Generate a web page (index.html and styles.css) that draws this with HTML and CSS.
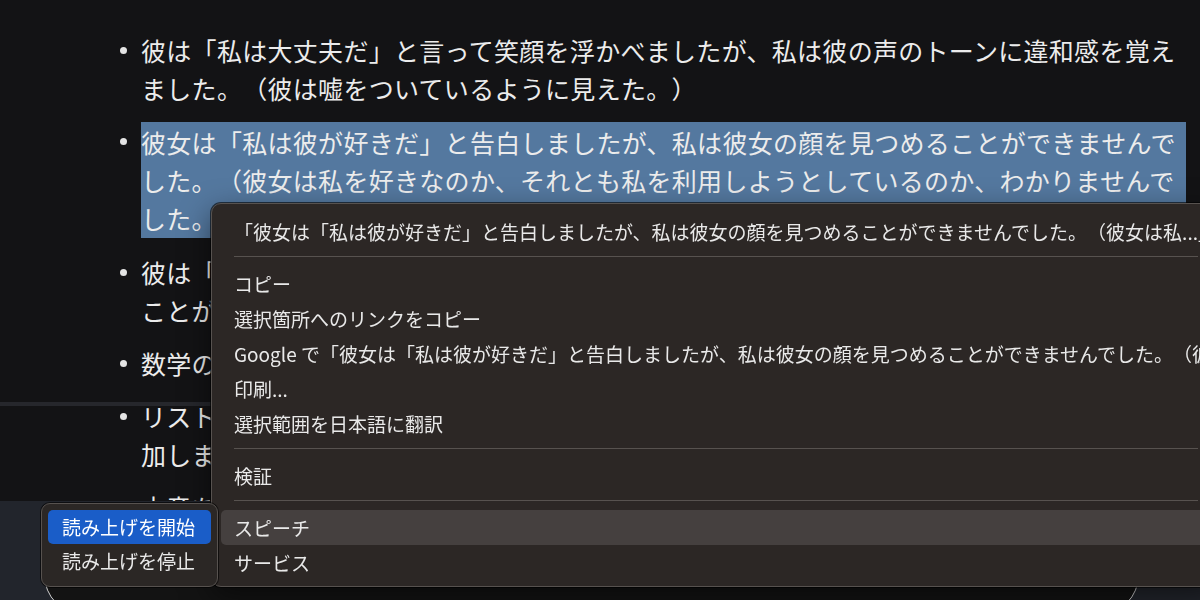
FILE: index.html
```html
<!DOCTYPE html>
<html lang="ja">
<head>
    <meta charset="UTF-8">
    <meta name="viewport" content="width=device-width, initial-scale=1.0">
    <title>感情の読み取り</title>
    <link rel="stylesheet" href="styles.css">
</head>
<body>

<main class="article">
    <ul class="points">
        <li>彼は「私は大丈夫だ」と言って笑顔を浮かべましたが、私は彼の声のトーンに違和感を覚えました。（彼は嘘をついているように見えた。）</li>
        <li><span class="selected">彼女は「私は彼が好きだ」と告白しましたが、私は彼女の顔を見つめることができませんでした。（彼女は私を好きなのか、それとも私を利用しようとしているのか、わかりませんでした。）</span></li>
        <li>彼は「明日は必ず来るよ」と約束してくれましたが、私はその言葉を心の底から強く信じることができませんでした。</li>
        <li>数学のテストで満点を取りましたが、先生は私がカンニングをしたと疑いました。</li>
        <li>リストの各項目には、感情の読み取りが難しい日常の場面の例文をいくつか選び、新たに追加しました。</li>
        <li>文章を読み直して、自然な表現になるように調整しました。</li>
    </ul>
</main>

<div class="scroll-edge"></div>

<footer class="composer">
    <div class="composer-box"></div>
</footer>

<!-- 右クリックメニュー -->
<div class="context-menu">
    <div class="menu-title">「彼女は「私は彼が好きだ」と告白しましたが、私は彼女の顔を見つめることができませんでした。（彼女は私...」</div>
    <div class="menu-sep"></div>
    <div class="menu-item">コピー</div>
    <div class="menu-item">選択箇所へのリンクをコピー</div>
    <div class="menu-item">Google で「彼女は「私は彼が好きだ」と告白しましたが、私は彼女の顔を見つめることができませんでした。（彼女は私...」を検索</div>
    <div class="menu-item">印刷...</div>
    <div class="menu-item">選択範囲を日本語に翻訳</div>
    <div class="menu-sep"></div>
    <div class="menu-item">検証</div>
    <div class="menu-sep"></div>
    <div class="menu-item is-open">スピーチ</div>
    <div class="menu-item">サービス</div>
</div>

<!-- スピーチのサブメニュー -->
<div class="submenu">
    <div class="submenu-item is-active">読み上げを開始</div>
    <div class="submenu-item">読み上げを停止</div>
</div>

</body>
</html>
```

FILE: styles.css
```css
/* リセット */
* {
    margin: 0;
    padding: 0;
    box-sizing: border-box;
}

body {
    font-family: "Noto Sans CJK JP", "Noto Sans", sans-serif;
    background: #131315;
    color: #ececec;
    height: 600px;
    overflow: hidden;
    text-spacing-trim: space-all;
}

/* 本文 */
.article {
    padding-top: 31px;
}

.points {
    list-style: none;
    width: 1186px;
    padding-left: 120px;
    font-size: 25px;
    letter-spacing: 0.3px;
    line-height: 38px;
}

.points li {
    display: flex;
    margin-bottom: 15px;
}

.points li::before {
    content: "";
    flex: none;
    width: 7px;
    height: 7px;
    margin: 15.5px 14px 0 0;
    border-radius: 50%;
    background: #e4e4e4;
}

.selected {
    background: #54789f;
    padding: 1px 0;
}

/* スクロール境界の帯 */
.scroll-edge {
    position: absolute;
    left: 0;
    top: 402px;
    width: 100%;
    height: 4px;
    background: #26272c;
}

/* 下部の入力エリア */
.composer {
    position: fixed;
    left: 0;
    right: 0;
    bottom: 0;
    height: 99px;
    padding: 14px 61px 0 44px;
    background: #22252c;
    overflow: hidden;
}

.composer-box {
    height: 100px;
    border: 1px solid #cfcfcf;
    border-radius: 40px;
    background: #131313;
}

/* コンテキストメニュー */
.context-menu {
    position: absolute;
    left: 211px;
    top: 203px;
    width: 1010px;
    padding: 11px 9px 6px;
    background: #2c2725;
    border: 1px solid #57524f;
    border-radius: 10px;
    box-shadow: 0 0 0 1px rgba(0, 0, 0, 0.6), 0 10px 30px rgba(0, 0, 0, 0.5);
    font-size: 19px;
    color: #e9e9e9;
    white-space: nowrap;
    overflow: hidden;
}

.menu-title {
    height: 34px;
    line-height: 34px;
    padding: 0 13px;
}

.menu-item {
    height: 35px;
    line-height: 35px;
    padding: 0 13px;
    border-radius: 5px;
}

.menu-item.is-open {
    background: #45403f;
}

.menu-sep {
    height: 1px;
    margin: 7px 13px 9px;
    background: #57524f;
}

/* サブメニュー */
.submenu {
    position: absolute;
    left: 41px;
    top: 503px;
    width: 177px;
    padding: 6px 6px 8px;
    background: #2b2725;
    border: 1px solid #57524f;
    border-radius: 9px;
    box-shadow: 0 0 0 1px rgba(0, 0, 0, 0.6);
    font-size: 19px;
    color: #e9e9e9;
    white-space: nowrap;
}

.submenu-item {
    height: 34px;
    line-height: 34px;
    padding: 0 14px;
    border-radius: 5px;
}

.submenu-item.is-active {
    background: #1a5dc8;
    color: #fff;
}
```
